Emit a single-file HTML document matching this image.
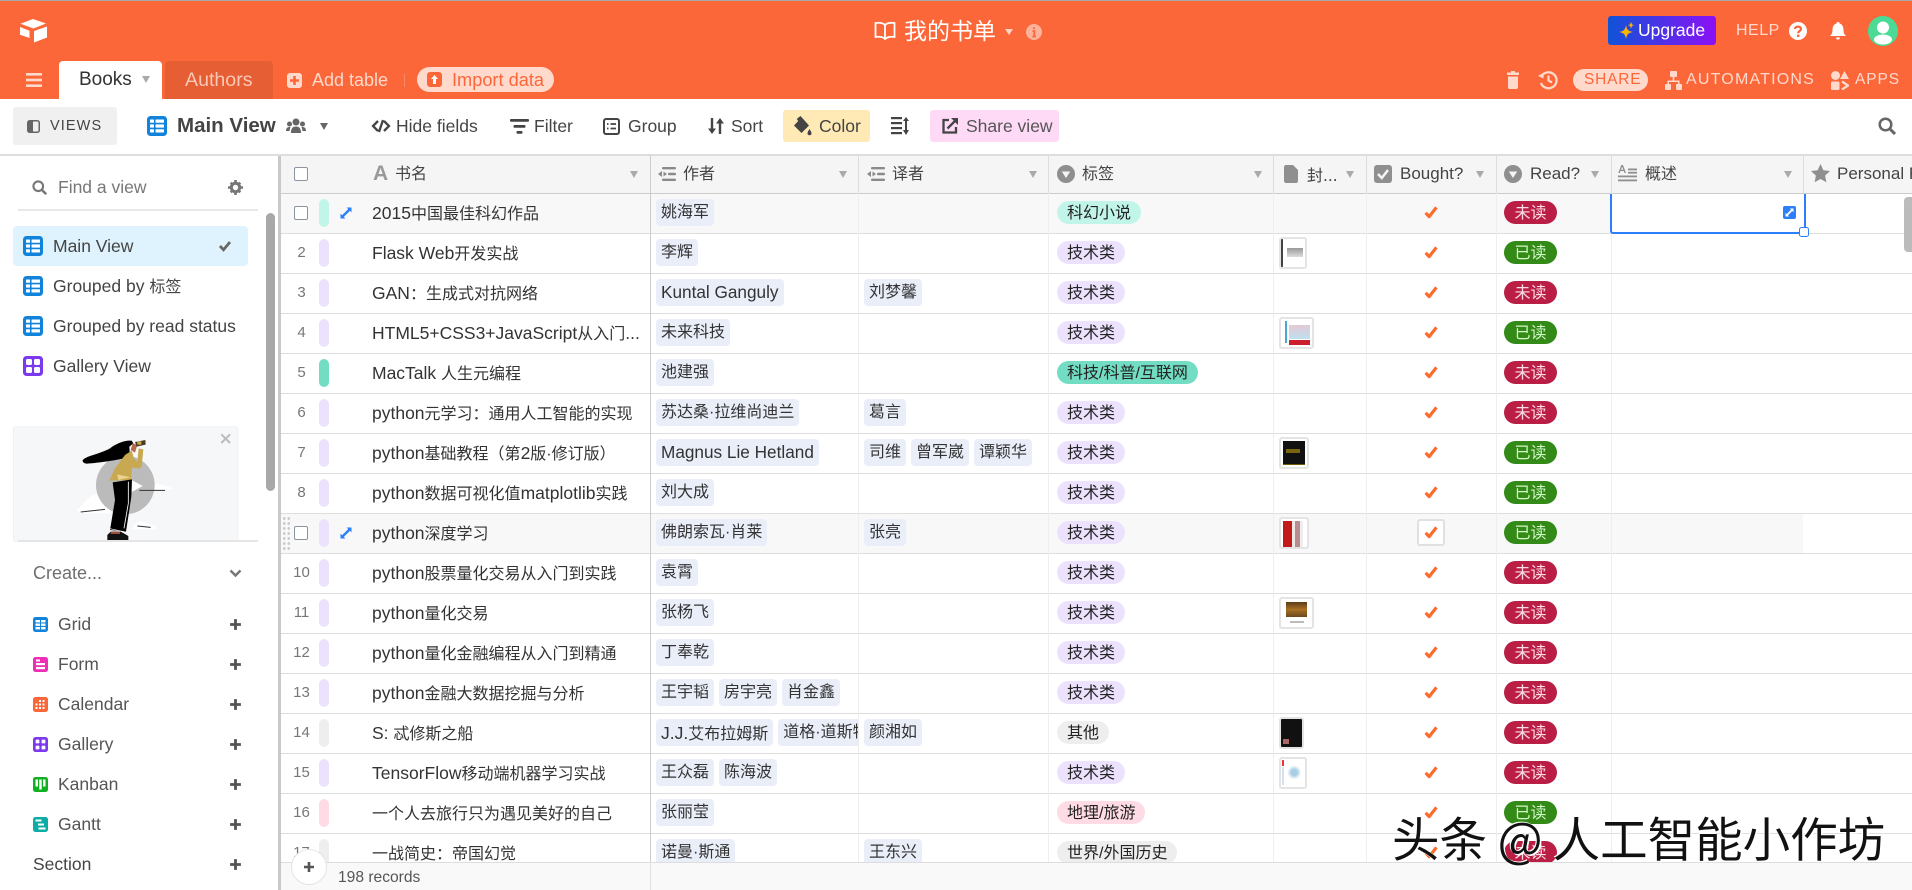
<!DOCTYPE html>
<html lang="zh"><head><meta charset="utf-8"><title>我的书单</title>
<style>
*{box-sizing:border-box}
html,body{margin:0;padding:0}
body{width:1912px;height:890px;overflow:hidden;position:relative;background:#fff;font-family:"Liberation Sans","Noto Sans CJK SC",sans-serif;font-size:16px;color:#333}
.a{position:absolute}
.x{position:absolute;white-space:nowrap;line-height:24px}
svg{display:block}
.L{font-size:17.5px}
.tri{position:absolute;width:0;height:0;border-left:4.5px solid transparent;border-right:4.5px solid transparent;border-top:7px solid #aaa}
.h{font-size:16px;color:#444;top:163px}
.h.L{font-size:17px;top:162px}
.sv{font-size:17.5px;color:#444}
.nav{font-size:17.5px;color:#555}
.r{position:absolute;left:280px;width:1632px;height:40px;border-bottom:1px solid #dedede;overflow:hidden}
.r.f{background:linear-gradient(90deg,#f8f8f8 1523px,#fff 1523px)}
.b{position:absolute;left:39px;top:5px;width:10px;height:28px;border-radius:5px}
.n{position:absolute;left:0;width:43px;top:7px;text-align:center;font-size:15px;line-height:24px;color:#777}
.t{position:absolute;left:92px;top:7px;line-height:24px;white-space:nowrap;color:#333}
.c1,.c2{position:absolute;top:5px;display:flex;gap:5px;overflow:hidden}
.c1{left:376px;width:202px}
.c2{left:584px;width:190px}
.p{flex:none;height:27px;line-height:28px;padding:0 5px;background:#e9eef9;border-radius:4px;color:#333;white-space:nowrap}
.p.L{font-size:17.2px;line-height:27px}
.tg{position:absolute;left:777px;top:7px;height:23px;line-height:25px;padding:0 10px;border-radius:12px;white-space:nowrap;color:#222;background:#ede2fe}
.cv{position:absolute;left:999px;top:3px;height:32px;border:2px solid #e4e4e4;border-radius:3px;background:#fff}
.ck{position:absolute;left:1144px;top:11px;width:14px;height:14px}
.rd{position:absolute;left:1224px;top:7px;width:53px;height:23px;line-height:25px;text-align:center;border-radius:12px}
.u{background:#ba1e45;color:#ffdce5}
.y{background:#338a17;color:#d1f7c4}
.cb{position:absolute;left:14px;top:12px;width:14px;height:14px;border:1px solid #8b94a0;border-radius:2px;background:#fff}
.e{position:absolute;left:59px;top:12px;width:14px;height:14px}
.v{position:absolute;top:155px;height:707px;width:1px;background:#eee}
.hv{position:absolute;top:155px;height:38px;width:1px;background:#ddd}
</style></head><body>
<svg width="0" height="0" style="position:absolute"><defs>
<symbol id="tb" viewBox="0 0 20 20"><rect width="20" height="20" rx="3.5" fill="#1283da"/><g fill="#fff"><rect x="3" y="3.5" width="4" height="3.2" rx=".6"/><rect x="8.5" y="3.5" width="8.5" height="3.2" rx=".6"/><rect x="3" y="8.4" width="4" height="3.2" rx=".6"/><rect x="8.5" y="8.4" width="8.5" height="3.2" rx=".6"/><rect x="3" y="13.3" width="4" height="3.2" rx=".6"/><rect x="8.5" y="13.3" width="8.5" height="3.2" rx=".6"/></g></symbol>
<symbol id="ch" viewBox="0 0 14 14"><path d="M1.6 7.8 5.2 11.6 12.4 2.4" fill="none" stroke="#fc6d2d" stroke-width="3.2" stroke-linejoin="round"/></symbol>
<symbol id="ex" viewBox="0 0 14 14"><path d="M3.6 10.4 10.4 3.6" stroke="#2d7ff9" stroke-width="2.4"/><path d="M7.6 1.5H12.5V6.4ZM1.5 7.6V12.5H6.4Z" fill="#2d7ff9"/></symbol>
<symbol id="pl" viewBox="0 0 12 12"><path d="M6 1V11M1 6H11" stroke="#555" stroke-width="2.6"/></symbol>
<symbol id="fl" viewBox="0 0 18 14"><g fill="#8a8a8a"><rect x="4" y="0" width="14" height="2.4" rx="1"/><rect x="10" y="5.8" width="8" height="2.4" rx="1"/><rect x="4" y="11.6" width="14" height="2.4" rx="1"/><path d="M0 7 4 4V10ZM9 7 5.5 4.500V9.500Z"/></g></symbol>
<symbol id="sl" viewBox="0 0 18 18"><circle cx="9" cy="9" r="9" fill="#8f8f8f"/><path d="M4.800 6.500H13.200L9 13Z" fill="#f5f5f5"/></symbol>
</defs></svg>

<!-- top bar -->
<div class="a" style="left:0;top:0;width:1912px;height:99px;background:#fb6739"></div>
<div class="a" style="left:0;top:0;width:1912px;height:1px;background:#a8a8a8"></div>
<svg class="a" style="left:19px;top:19px" width="29" height="24" viewBox="0 0 29 24"><path d="M14 0 27 4.500 14.500 9.500 1.500 4.800Z" fill="#fff"/><path d="M1 8 10.500 11.800V19L1 15.800Z" fill="#fff"/><path d="M15 12 28 7.500V18.500L15 23.500Z" fill="#fff"/></svg>
<svg class="a" style="left:874px;top:21px" width="22" height="20" viewBox="0 0 22 20" fill="none" stroke="#fff" stroke-width="1.800"><path d="M11 4C9 2 5 1.500 1.500 2V16C5 15.500 9 16 11 18 13 16 17 15.500 20.500 16V2C17 1.500 13 2 11 4ZM11 4V18"/></svg>
<div class="x" style="left:904px;top:15px;font-size:23px;line-height:32px;color:#fff">我的书单</div>
<div class="tri" style="left:1005px;top:29px;border-top-color:#ffd3c5;border-left-width:4px;border-right-width:4px;border-top-width:6px"></div>
<svg class="a" style="left:1026px;top:24px" width="16" height="16" viewBox="0 0 16 16"><circle cx="8" cy="8" r="8" fill="#fdb29b"/><path d="M8 3.200V5M6.500 7H8.300V12.500M6.300 12.500H10" stroke="#fb6739" stroke-width="1.800" fill="none"/></svg>
<div class="a" style="left:1608px;top:16px;width:108px;height:29px;border-radius:3px;background:linear-gradient(90deg,#0f53d8,#8c10f6)"></div>
<svg class="a" style="left:1618px;top:22px" width="16" height="18" viewBox="0 0 16 18"><path d="M8 3C9 8 10 9 15 10 10 11 9 12 8 17 7 12 6 11 1 10 6 9 7 8 8 3Z" fill="#fcb400"/><path d="M13 0 14 2.500 16 3 14 4 13 6.500 12 4 10 3 12 2.500Z" fill="#fcb400"/></svg>
<div class="x" style="left:1638px;top:18px;font-size:17.500px;color:#fff">Upgrade</div>
<div class="x" style="left:1736px;top:19px;font-size:16px;letter-spacing:.5px;color:#ffd9cc">HELP</div>
<svg class="a" style="left:1789px;top:22px" width="18" height="18" viewBox="0 0 18 18"><circle cx="9" cy="9" r="9" fill="#fff"/><path d="M6 7C6 3.800 12 3.800 12 7 12 9 9.200 9 9.200 11.300" fill="none" stroke="#fb6739" stroke-width="2.200"/><rect x="8" y="12.600" width="2.400" height="2.400" fill="#fb6739"/></svg>
<svg class="a" style="left:1830px;top:22px" width="16" height="18" viewBox="0 0 16 18"><path d="M8 0C9 0 9.500.6 9.500 1.500 12.500 2.300 13.500 5 13.500 8 13.500 11 14.500 12.500 16 14H0C1.500 12.500 2.500 11 2.500 8 2.500 5 3.500 2.300 6.500 1.500 6.500.6 7 0 8 0ZM6 15.500H10C10 18.300 6 18.300 6 15.500Z" fill="#fff"/></svg>
<svg class="a" style="left:1868px;top:16px" width="30" height="30" viewBox="0 0 30 30"><circle cx="15" cy="15" r="15" fill="#4bdb95"/><circle cx="15" cy="11.500" r="6" fill="#fff"/><ellipse cx="15" cy="23.500" rx="9" ry="5" fill="#fff"/></svg>

<!-- tab row -->
<svg class="a" style="left:26px;top:73px" width="16" height="14" viewBox="0 0 16 14"><g fill="#ffd9cc"><rect y="0" width="16" height="2.600"/><rect y="5.700" width="16" height="2.600"/><rect y="11.400" width="16" height="2.600"/></g></svg>
<div class="a" style="left:59px;top:61px;width:103px;height:38px;background:#fff;border-radius:4px 4px 0 0"></div>
<div class="x" style="left:79px;top:68px;font-size:19px;color:#333">Books</div>
<div class="tri" style="left:142px;top:76px"></div>
<div class="a" style="left:165px;top:61px;width:108px;height:38px;background:#e55e34;border-radius:4px 4px 0 0"></div>
<div class="x" style="left:185px;top:68px;font-size:19.600px;color:#fcc8b6">Authors</div>
<svg class="a" style="left:287px;top:73px" width="15" height="15" viewBox="0 0 15 15"><rect width="15" height="15" rx="3" fill="#ffd9cc"/><path d="M7.500 3V12M3 7.500H12" stroke="#fb6739" stroke-width="2.600"/></svg>
<div class="x" style="left:312px;top:68px;font-size:18px;color:#ffd9cc">Add table</div>
<div class="a" style="left:404px;top:74px;width:1px;height:13px;background:#fc8c69"></div>
<div class="a" style="left:417px;top:67px;width:137px;height:25px;border-radius:13px;background:#ffd9cc"></div>
<svg class="a" style="left:427px;top:72px" width="15" height="15" viewBox="0 0 15 15"><rect width="15" height="15" rx="3" fill="#fb6739"/><path d="M7.500 3 11 7H9V12H6V7H4Z" fill="#fff"/></svg>
<div class="x" style="left:452px;top:68px;font-size:18.200px;color:#fb6739">Import data</div>
<svg class="a" style="left:1507px;top:71px" width="12" height="18" viewBox="0 0 12 18" fill="#ffd9cc"><path d="M4 0H8V1.500H12V4H0V1.500H4ZM1 5.500H11V16C11 17 10.500 18 9.500 18H2.500C1.500 18 1 17 1 16Z"/></svg>
<svg class="a" style="left:1538px;top:70px" width="20" height="20" viewBox="0 0 20 20" fill="none" stroke="#ffd9cc" stroke-width="2.300"><path d="M3.500 6.500A8 8 0 1 1 3 13"/><path d="M10.500 5.500V10.500L14 12.500"/><path d="M0 6 5.500 8.500 5.800 2.500Z" fill="#ffd9cc" stroke="none"/></svg>
<div class="a" style="left:1573px;top:69px;width:75px;height:22px;border-radius:11px;background:#ffd9cc"></div>
<div class="x" style="left:1584px;top:68px;font-size:15.500px;letter-spacing:.8px;color:#fb6739">SHARE</div>
<svg class="a" style="left:1665px;top:71px" width="17" height="19" viewBox="0 0 17 19" fill="#ffd9cc"><rect x="5" y="0" width="7" height="6" rx="1"/><rect x="0" y="13" width="6" height="6" rx="1"/><rect x="11" y="13" width="6" height="6" rx="1"/><path d="M7.700 6H9.300V9.500H14.500V13H13V11H4V13H2.500V9.500H7.700Z"/></svg>
<div class="x" style="left:1686px;top:68px;font-size:16px;letter-spacing:1.200px;color:#ffd9cc">AUTOMATIONS</div>
<svg class="a" style="left:1831px;top:71px" width="18" height="19" viewBox="0 0 18 19" fill="#ffd9cc"><circle cx="4.500" cy="4.500" r="4.500"/><path d="M13.500 0 18 8H9Z"/><rect y="10.500" width="8.500" height="8.500" rx="1.500"/><path d="M11 10.500 17 14.500 11 18.500" fill="none" stroke="#ffd9cc" stroke-width="2.400"/></svg>
<div class="x" style="left:1855px;top:68px;font-size:15.500px;letter-spacing:.9px;color:#ffd9cc">APPS</div>

<!-- toolbar -->
<div class="a" style="left:13px;top:107px;width:104px;height:38px;background:#f0f0f0;border-radius:3px"></div>
<svg class="a" style="left:27px;top:120px" width="13" height="13" viewBox="0 0 13 13"><rect x=".75" y=".75" width="11.500" height="11.500" rx="2" fill="none" stroke="#666" stroke-width="1.500"/><rect x="1" y="1" width="5" height="11" fill="#666"/></svg>
<div class="x" style="left:50px;top:114px;font-size:14.500px;letter-spacing:1.100px;color:#444">VIEWS</div>
<svg class="a" style="left:147px;top:116px" width="20" height="20"><use href="#tb"/></svg>
<div class="x" style="left:177px;top:113px;font-size:20.500px;line-height:26px;font-weight:bold;color:#444">Main View</div>
<svg class="a" style="left:286px;top:118px" width="20" height="16" viewBox="0 0 20 16" fill="#666"><circle cx="10" cy="4" r="3.500"/><circle cx="3.500" cy="6" r="2.500"/><circle cx="16.500" cy="6" r="2.500"/><path d="M5 15C5 10 7 8.500 10 8.500 13 8.500 15 10 15 15ZM0 13C0 10 1.500 9 3.500 9 4.200 9 4.500 9.200 4.500 9.500 3.800 10.500 3.600 12 3.600 13ZM20 13C20 10 18.500 9 16.500 9 15.800 9 15.500 9.200 15.500 9.500 16.200 10.500 16.400 12 16.400 13Z"/></svg>
<div class="tri" style="left:320px;top:123px;border-top-color:#666"></div>
<svg class="a" style="left:371px;top:118px" width="20" height="16" viewBox="0 0 20 16" fill="none" stroke="#444" stroke-width="2.300"><path d="M7 3 2 8 7 13M13 3 18 8 13 13M12 2 8 14"/></svg>
<div class="x sv" style="left:396px;top:114px">Hide fields</div>
<svg class="a" style="left:510px;top:119px" width="19" height="15" viewBox="0 0 19 15" fill="#444"><rect width="19" height="2.800" rx="1"/><rect x="3.500" y="6" width="12" height="2.800" rx="1"/><rect x="6.500" y="12" width="6" height="2.800" rx="1"/></svg>
<div class="x sv" style="left:534px;top:114px">Filter</div>
<svg class="a" style="left:603px;top:118px" width="17" height="17" viewBox="0 0 17 17" fill="none" stroke="#444" stroke-width="2"><rect x="1" y="1" width="15" height="15" rx="2"/><path d="M4 6H5.500M7.500 6H13M4 10.500H5.500M7.500 10.500H13" stroke-width="1.800"/></svg>
<div class="x sv" style="left:628px;top:114px">Group</div>
<svg class="a" style="left:708px;top:118px" width="16" height="16" viewBox="0 0 16 16" fill="#444"><path d="M2.800 0H5.200V10.500H8L4 16 0 10.500H2.800ZM10.800 16H13.200V5.500H16L12 0 8 5.500H10.800Z"/></svg>
<div class="x sv" style="left:731px;top:114px">Sort</div>
<div class="a" style="left:783px;top:110px;width:87px;height:32px;border-radius:3px;background:#ffe9b4"></div>
<svg class="a" style="left:793px;top:116px" width="19" height="20" viewBox="0 0 19 20" fill="#444"><path d="M7.500 0 16 9.500 8.500 17 1 9.500 5.200 5 3.800 3 5.200 1.800ZM16.500 13C17.700 15 18.500 16 18.500 17.300A2 2 0 0 1 14.500 17.300C14.500 16 15.300 15 16.500 13Z"/></svg>
<div class="x sv" style="left:819px;top:114px">Color</div>
<svg class="a" style="left:891px;top:117px" width="18" height="18" viewBox="0 0 18 18" fill="#444"><rect width="11" height="2.200"/><rect y="5" width="11" height="2.200"/><rect y="10" width="11" height="2.200"/><rect y="15" width="11" height="2.200"/><path d="M15 0 18 4H16V13H18L15 18 12 13H14V4H12Z"/></svg>
<div class="a" style="left:930px;top:110px;width:129px;height:32px;border-radius:3px;background:#ffdaf6"></div>
<svg class="a" style="left:942px;top:118px" width="16" height="16" viewBox="0 0 16 16" fill="none" stroke="#444" stroke-width="2.300"><path d="M7 2H1.500V14.500H14V9"/><path d="M5.500 10.500 13 3"/><path d="M9 0H16V7Z" fill="#444" stroke="none"/></svg>
<div class="x sv" style="left:966px;top:114px;color:#555">Share view</div>
<svg class="a" style="left:1878px;top:117px" width="18" height="18" viewBox="0 0 18 18" fill="none" stroke="#666" stroke-width="2.500"><circle cx="7.500" cy="7.500" r="5.800"/><path d="M12 12 17 17" stroke-width="3"/></svg>
<div class="a" style="left:0;top:154px;width:1912px;height:2px;background:#ddd"></div>

<!-- sidebar -->
<svg class="a" style="left:32px;top:180px" width="15" height="15" viewBox="0 0 18 18" fill="none" stroke="#777" stroke-width="2.500"><circle cx="7.500" cy="7.500" r="5.800"/><path d="M12 12 17 17" stroke-width="3"/></svg>
<div class="x nav" style="left:58px;top:175px;color:#777">Find a view</div>
<svg class="a" style="left:228px;top:180px" width="15" height="15" viewBox="0 0 15 15"><circle cx="7.500" cy="7.500" r="4.200" fill="none" stroke="#777" stroke-width="3"/><path d="M6.200 0H8.800V3H6.200ZM6.200 12H8.800V15H6.200ZM0 6.200H3V8.800H0ZM12 6.200H15V8.800H12ZM1.800 3.600 3.600 1.800 5.300 3.500 3.500 5.300ZM9.700 11.500 11.500 9.700 13.200 11.400 11.400 13.200ZM1.800 11.400 3.500 9.700 5.300 11.500 3.600 13.200ZM9.700 3.500 11.400 1.800 13.200 3.600 11.500 5.300Z" fill="#777"/></svg>
<div class="a" style="left:18px;top:209px;width:240px;height:2px;background:#e8e8e8"></div>
<div class="a" style="left:13px;top:226px;width:235px;height:40px;border-radius:4px;background:#def3fd"></div>
<svg class="a" style="left:23px;top:236px" width="20" height="20"><use href="#tb"/></svg>
<div class="x nav" style="left:53px;top:234px;color:#444">Main View</div>
<svg class="a" style="left:219px;top:240px" width="12" height="12"><path d="M1 6 4.500 9.800 11 2" fill="none" stroke="#666" stroke-width="2.800"/></svg>
<svg class="a" style="left:23px;top:276px" width="20" height="20"><use href="#tb"/></svg>
<div class="x nav" style="left:53px;top:274px;color:#444">Grouped by <span style="font-size:16px">标签</span></div>
<svg class="a" style="left:23px;top:316px" width="20" height="20"><use href="#tb"/></svg>
<div class="x nav" style="left:53px;top:314px;color:#444">Grouped by read status</div>
<svg class="a" style="left:23px;top:356px" width="20" height="20" viewBox="0 0 20 20"><rect width="20" height="20" rx="3.500" fill="#7c39ed"/><g fill="#fff"><rect x="3" y="3" width="6" height="6" rx="1.500"/><rect x="11" y="3" width="6" height="6" rx="1.500"/><rect x="3" y="11" width="6" height="6" rx="1.500"/><rect x="11" y="11" width="6" height="6" rx="1.500"/></g></svg>
<div class="x nav" style="left:53px;top:354px;color:#444">Gallery View</div>
<div class="a" style="left:266px;top:213px;width:9px;height:278px;border-radius:5px;background:#a8a8a8"></div>

<svg class="a" style="left:0;top:230px" width="290" height="330" viewBox="0 0 870 990">
<rect x="40" y="590" width="674" height="345" rx="6" fill="#f6f7f9" stroke="#eee" stroke-width="2"/>
<path d="M230 838C250 830 260 800 285 795L330 800V850H240ZM400 890C410 875 420 868 440 880L470 890V898H395ZM420 775 470 760 520 775 480 782Z" fill="#fff"/>
<circle cx="376" cy="765" r="88" fill="#bbb"/>
<path d="M395 750 428 768 395 786Z" fill="#fff"/>
<path d="M248 690C262 676 300 672 330 655 350 640 375 630 395 632L400 640 388 650 390 680C360 690 300 698 262 701 252 701 247 696 248 690Z" fill="#000"/>
<path d="M398 640 412 645 405 668 392 660Z" fill="#b76a4e"/>
<path d="M405 636 436 630 437 644 410 650Z" fill="#4a3c20"/><rect x="412" y="634" width="12" height="10" fill="#c8a850"/>
<path d="M375 675 395 662 402 685 412 695 416 655 430 658 425 710 418 716 396 712 393 750 328 752 345 715Z" fill="#c8a850"/>
<path d="M352 733 392 742 355 750Z" fill="#e8d48a"/>
<path d="M338 757 396 748 394 800 378 905 330 900 345 810Z" fill="#000"/>
<path d="M385 755V820L372 895" fill="none" stroke="#fff" stroke-width="2.500"/><path d="M330 896 372 905" stroke="#fff" stroke-width="2"/>
<path d="M332 905H362L385 918V930H322V915Z" fill="#111"/><path d="M332 905H360V912H332Z" fill="#9b4e3c"/>
<path d="M242 846 315 838M418 781H495M412 888 452 892" stroke="#333" stroke-width="3"/>
<path d="M664 613 690 639M690 613 664 639" stroke="#bbb" stroke-width="6"/>
</svg>
<div class="a" style="left:18px;top:540px;width:240px;height:2px;background:#e5e5e5"></div>

<div class="x nav" style="left:33px;top:561px;color:#6f6f6f;font-size:18px">Create...</div>
<svg class="a" style="left:229px;top:569px" width="13" height="9"><path d="M1.500 1.500 6.500 6.500 11.500 1.500" fill="none" stroke="#777" stroke-width="2.500"/></svg>
<svg class="a" style="left:33px;top:617px" width="15" height="15" viewBox="0 0 15 15"><rect width="15" height="15" rx="2.500" fill="#1283da"/><g fill="#fff"><rect x="2.500" y="3" width="4.500" height="2.400"/><rect x="8" y="3" width="4.500" height="2.400"/><rect x="2.500" y="6.500" width="4.500" height="2.400"/><rect x="8" y="6.500" width="4.500" height="2.400"/><rect x="2.500" y="10" width="4.500" height="2.400"/><rect x="8" y="10" width="4.500" height="2.400"/></g></svg>
<div class="x nav" style="left:58px;top:612px">Grid</div>
<svg class="a" style="left:33px;top:657px" width="15" height="15" viewBox="0 0 15 15"><rect width="15" height="15" rx="2.500" fill="#ee2fb5"/><g fill="#fff"><rect x="3" y="2.500" width="4" height="2"/><rect x="3" y="6" width="9" height="2.200"/><rect x="3" y="10" width="9" height="2.200"/></g></svg>
<div class="x nav" style="left:58px;top:652px">Form</div>
<svg class="a" style="left:33px;top:697px" width="15" height="15" viewBox="0 0 15 15"><rect width="15" height="15" rx="2.500" fill="#fb6739"/><g fill="#fff"><rect x="6" y="3" width="2" height="2"/><rect x="9.500" y="3" width="2" height="2"/><rect x="2.500" y="6.500" width="2" height="2"/><rect x="6" y="6.500" width="2" height="2"/><rect x="9.500" y="6.500" width="2" height="2"/><rect x="2.500" y="10" width="2" height="2"/><rect x="6" y="10" width="2" height="2"/><rect x="9.500" y="10" width="2" height="2"/></g></svg>
<div class="x nav" style="left:58px;top:692px">Calendar</div>
<svg class="a" style="left:33px;top:737px" width="15" height="15" viewBox="0 0 20 20"><rect width="20" height="20" rx="3.500" fill="#7c39ed"/><g fill="#fff"><rect x="3.500" y="3.500" width="5" height="5" rx="1"/><rect x="11.500" y="3.500" width="5" height="5" rx="1"/><rect x="3.500" y="11.500" width="5" height="5" rx="1"/><rect x="11.500" y="11.500" width="5" height="5" rx="1"/></g></svg>
<div class="x nav" style="left:58px;top:732px">Gallery</div>
<svg class="a" style="left:33px;top:777px" width="15" height="15" viewBox="0 0 15 15"><rect width="15" height="15" rx="2.500" fill="#11af22"/><g fill="#fff"><rect x="2.500" y="2.500" width="2.500" height="7"/><rect x="6.200" y="2.500" width="2.500" height="10"/><rect x="10" y="2.500" width="2.500" height="7"/></g></svg>
<div class="x nav" style="left:58px;top:772px">Kanban</div>
<svg class="a" style="left:33px;top:817px" width="15" height="15" viewBox="0 0 15 15"><rect width="15" height="15" rx="2.500" fill="#0dada5"/><g fill="#fff"><rect x="2.500" y="2.500" width="6" height="2"/><rect x="5" y="6.500" width="6" height="2"/><rect x="5.500" y="10.500" width="7" height="2"/></g></svg>
<div class="x nav" style="left:58px;top:812px">Gantt</div>
<div class="x nav" style="left:33px;top:852px;color:#444">Section</div>
<svg class="a" style="left:229px;top:618px" width="13" height="13"><use href="#pl"/></svg>
<svg class="a" style="left:229px;top:658px" width="13" height="13"><use href="#pl"/></svg>
<svg class="a" style="left:229px;top:698px" width="13" height="13"><use href="#pl"/></svg>
<svg class="a" style="left:229px;top:738px" width="13" height="13"><use href="#pl"/></svg>
<svg class="a" style="left:229px;top:778px" width="13" height="13"><use href="#pl"/></svg>
<svg class="a" style="left:229px;top:818px" width="13" height="13"><use href="#pl"/></svg>
<svg class="a" style="left:229px;top:858px" width="13" height="13"><use href="#pl"/></svg>

<!-- rows -->
<div class="r f" style="top:194px"><i class="b" style="background:#c2f5e9"></i><i class="cb"></i><svg class="e"><use href="#ex"/></svg><span class="t"><span class="L">2015</span>中国最佳科幻作品</span><div class="c1"><span class="p">姚海军</span></div><span class="tg" style="background:#c2f5e9">科幻小说</span><svg class="ck"><use href="#ch"/></svg><span class="rd u">未读</span></div>
<div class="r" style="top:234px"><i class="b" style="background:#ede2fe"></i><span class="n">2</span><span class="t"><span class="L">Flask Web</span>开发实战</span><div class="c1"><span class="p">李辉</span></div><span class="tg">技术类</span><i class="cv" style="width:28px;background:linear-gradient(90deg,#444 0 2px,#fff 2px 24px,#d44 24px) 0 0/100% 100%,#fff"></i><i class="a" style="left:1007px;top:14px;width:16px;height:9px;background:linear-gradient(#999,#ddd)"></i><svg class="ck"><use href="#ch"/></svg><span class="rd y">已读</span></div>
<div class="r" style="top:274px"><i class="b" style="background:#ede2fe"></i><span class="n">3</span><span class="t"><span class="L">GAN</span>：生成式对抗网络</span><div class="c1"><span class="p L">Kuntal Ganguly</span></div><div class="c2"><span class="p">刘梦馨</span></div><span class="tg">技术类</span><svg class="ck"><use href="#ch"/></svg><span class="rd u">未读</span></div>
<div class="r" style="top:314px"><i class="b" style="background:#ede2fe"></i><span class="n">4</span><span class="t"><span class="L">HTML5+CSS3+JavaScript</span>从入门<span class="L">...</span></span><div class="c1"><span class="p">未来科技</span></div><span class="tg">技术类</span><i class="cv" style="width:35px;background:linear-gradient(#c9202c,#c9202c) 8px 21px/21px 5px no-repeat,linear-gradient(#e3c9d6,#bfe0ee) 8px 6px/21px 14px no-repeat,linear-gradient(#4aa7d0,#4aa7d0) 4px 2px/2px 22px no-repeat,#fff"></i><svg class="ck"><use href="#ch"/></svg><span class="rd y">已读</span></div>
<div class="r" style="top:354px"><i class="b" style="background:#72ddc3"></i><span class="n">5</span><span class="t"><span class="L">MacTalk </span>人生元编程</span><div class="c1"><span class="p">池建强</span></div><span class="tg" style="background:#72ddc3">科技/科普/互联网</span><svg class="ck"><use href="#ch"/></svg><span class="rd u">未读</span></div>
<div class="r" style="top:394px"><i class="b" style="background:#ede2fe"></i><span class="n">6</span><span class="t"><span class="L">python</span>元学习：通用人工智能的实现</span><div class="c1"><span class="p">苏达桑·拉维尚迪兰</span></div><div class="c2"><span class="p">葛言</span></div><span class="tg">技术类</span><svg class="ck"><use href="#ch"/></svg><span class="rd u">未读</span></div>
<div class="r" style="top:434px"><i class="b" style="background:#ede2fe"></i><span class="n">7</span><span class="t"><span class="L">python</span>基础教程（第<span class="L">2</span>版·修订版）</span><div class="c1"><span class="p L">Magnus Lie Hetland</span></div><div class="c2"><span class="p">司维</span><span class="p">曾军崴</span><span class="p">谭颖华</span></div><span class="tg">技术类</span><i class="cv" style="width:30px;background:linear-gradient(#7a6510,#7a6510) 5px 10px/14px 4px no-repeat,linear-gradient(180deg,#111 0 23px,#d0a800 24px) 2px 2px/22px 24px no-repeat,#fff"></i><svg class="ck"><use href="#ch"/></svg><span class="rd y">已读</span></div>
<div class="r" style="top:474px"><i class="b" style="background:#ede2fe"></i><span class="n">8</span><span class="t"><span class="L">python</span>数据可视化值<span class="L">matplotlib</span>实践</span><div class="c1"><span class="p">刘大成</span></div><span class="tg">技术类</span><svg class="ck"><use href="#ch"/></svg><span class="rd y">已读</span></div>
<div class="r f" style="top:514px"><i class="a" style="left:2px;top:2px;width:9px;height:36px;background:radial-gradient(circle,#ccc 1.300px,transparent 1.500px) 0 0/4.500px 5px"></i><i class="b" style="background:#ede2fe"></i><i class="cb"></i><svg class="e"><use href="#ex"/></svg><span class="t"><span class="L">python</span>深度学习</span><div class="c1"><span class="p">佛朗索瓦·肖莱</span></div><div class="c2"><span class="p">张亮</span></div><span class="tg">技术类</span><i class="cv" style="width:30px;background:linear-gradient(90deg,#c21a1a 0 9px,#efe6e6 9px 12px,#b88c90 12px 17px,#eee 17px 20px,#fff 20px) 2px 2px/22px 26px no-repeat,#fff"></i><i class="a" style="left:1137px;top:5px;width:28px;height:27px;background:#fff;border:2px solid #e0e0e0;border-radius:3px"></i><svg class="ck"><use href="#ch"/></svg><span class="rd y">已读</span></div>
<div class="r" style="top:554px"><i class="b" style="background:#ede2fe"></i><span class="n">10</span><span class="t"><span class="L">python</span>股票量化交易从入门到实践</span><div class="c1"><span class="p">袁霄</span></div><span class="tg">技术类</span><svg class="ck"><use href="#ch"/></svg><span class="rd u">未读</span></div>
<div class="r" style="top:594px"><i class="b" style="background:#ede2fe"></i><span class="n">11</span><span class="t"><span class="L">python</span>量化交易</span><div class="c1"><span class="p">张杨飞</span></div><span class="tg">技术类</span><i class="cv" style="width:35px;background:linear-gradient(#5a3c18,#a96f25,#6a4a1e) 50% 3px/21px 15px no-repeat,linear-gradient(#bbb,#bbb) 50% 22px/14px 2px no-repeat,#fff"></i><svg class="ck"><use href="#ch"/></svg><span class="rd u">未读</span></div>
<div class="r" style="top:634px"><i class="b" style="background:#ede2fe"></i><span class="n">12</span><span class="t"><span class="L">python</span>量化金融编程从入门到精通</span><div class="c1"><span class="p">丁奉乾</span></div><span class="tg">技术类</span><svg class="ck"><use href="#ch"/></svg><span class="rd u">未读</span></div>
<div class="r" style="top:674px"><i class="b" style="background:#ede2fe"></i><span class="n">13</span><span class="t"><span class="L">python</span>金融大数据挖掘与分析</span><div class="c1"><span class="p">王宇韬</span><span class="p">房宇亮</span><span class="p">肖金鑫</span></div><span class="tg">技术类</span><svg class="ck"><use href="#ch"/></svg><span class="rd u">未读</span></div>
<div class="r" style="top:714px"><i class="b" style="background:#eee"></i><span class="n">14</span><span class="t"><span class="L">S: </span>忒修斯之船</span><div class="c1"><span class="p"><span class="L">J.J.</span>艾布拉姆斯</span><span class="p">道格·道斯特</span></div><div class="c2"><span class="p">颜湘如</span></div><span class="tg" style="background:#eee">其他</span><i class="cv" style="width:25px;background:linear-gradient(#a66,#a66) 2px 20px/6px 5px no-repeat,#111"></i><svg class="ck"><use href="#ch"/></svg><span class="rd u">未读</span></div>
<div class="r" style="top:754px"><i class="b" style="background:#ede2fe"></i><span class="n">15</span><span class="t"><span class="L">TensorFlow</span>移动端机器学习实战</span><div class="c1"><span class="p">王众磊</span><span class="p">陈海波</span></div><span class="tg">技术类</span><i class="cv" style="width:28px;background:linear-gradient(#e33,#e33) 1px 1px/2px 6px no-repeat,linear-gradient(#cfe3f2,#cfe3f2) 1px 8px/2px 18px no-repeat,radial-gradient(circle at 55% 48%,#a8cde4 0 3px,#fff 7px)"></i><svg class="ck"><use href="#ch"/></svg><span class="rd u">未读</span></div>
<div class="r" style="top:794px"><i class="b" style="background:#ffdce5"></i><span class="n">16</span><span class="t" style="top:8.500px">一个人去旅行只为遇见美好的自己</span><div class="c1"><span class="p">张丽莹</span></div><span class="tg" style="background:#ffdce5">地理/旅游</span><svg class="ck"><use href="#ch"/></svg><span class="rd y">已读</span></div>
<div class="r" style="top:834px"><i class="b" style="background:#eee"></i><span class="n">17</span><span class="t" style="top:8.500px">一战简史：帝国幻觉</span><div class="c1"><span class="p">诺曼·斯通</span></div><div class="c2"><span class="p">王东兴</span></div><span class="tg" style="background:#eee">世界/外国历史</span><svg class="ck"><use href="#ch"/></svg><span class="rd u">未读</span></div>

<!-- grid header -->
<div class="a" style="left:281px;top:156px;width:1631px;height:38px;background:#f5f5f5;border-bottom:1px solid #ccc"></div>
<i class="a" style="left:294px;top:167px;width:14px;height:14px;border:1px solid #8b94a0;border-radius:2px;background:#fff"></i>
<div class="x" style="left:373px;top:160px;font-size:21px;font-weight:bold;color:#999;line-height:28px">A</div>
<div class="x h" style="left:395px">书名</div><div class="tri" style="left:630px;top:171px"></div>
<svg class="a" style="left:658px;top:167px" width="18" height="14"><use href="#fl"/></svg>
<div class="x h" style="left:683px">作者</div><div class="tri" style="left:839px;top:171px"></div>
<svg class="a" style="left:867px;top:167px" width="18" height="14"><use href="#fl"/></svg>
<div class="x h" style="left:892px">译者</div><div class="tri" style="left:1029px;top:171px"></div>
<svg class="a" style="left:1057px;top:165px" width="18" height="18"><use href="#sl"/></svg>
<div class="x h" style="left:1082px">标签</div><div class="tri" style="left:1254px;top:171px"></div>
<svg class="a" style="left:1284px;top:165px" width="14" height="18" viewBox="0 0 14 18"><path d="M2 0H9L14 5V16C14 17 13 18 12 18H2C1 18 0 17 0 16V2C0 1 1 0 2 0Z" fill="#8f8f8f"/></svg>
<div class="x h" style="left:1307px">封<span class="L">...</span></div><div class="tri" style="left:1346px;top:171px"></div>
<svg class="a" style="left:1374px;top:165px" width="18" height="18" viewBox="0 0 18 18"><rect width="18" height="18" rx="3" fill="#8f8f8f"/><path d="M4 9 7.800 13 14 5" fill="none" stroke="#f5f5f5" stroke-width="2.500"/></svg>
<div class="x h L" style="left:1400px">Bought?</div><div class="tri" style="left:1476px;top:171px"></div>
<svg class="a" style="left:1504px;top:165px" width="18" height="18"><use href="#sl"/></svg>
<div class="x h L" style="left:1530px">Read?</div><div class="tri" style="left:1591px;top:171px"></div>
<svg class="a" style="left:1618px;top:165px" width="20" height="18" viewBox="0 0 20 18" fill="#8f8f8f"><path d="M3.300 0H5L8 8H6.500L5.800 6H2.500L1.800 8H.3ZM3 4.800H5.300L4.100 1.600Z"/><rect x="10" y="3.500" width="9" height="1.800"/><rect x="10" y="6.800" width="9" height="1.800"/><rect y="10.500" width="19" height="1.800"/><rect y="14.500" width="19" height="1.800"/></svg>
<div class="x h" style="left:1645px">概述</div><div class="tri" style="left:1784px;top:171px"></div>
<svg class="a" style="left:1811px;top:164px" width="19" height="19" viewBox="0 0 19 19"><path d="M9.500 0 12.400 6.300 19 7 14.100 11.600 15.400 18.300 9.500 15 3.600 18.300 4.900 11.600 0 7 6.600 6.300Z" fill="#8f8f8f"/></svg>
<div class="x h L" style="left:1837px">Personal Rating</div>

<!-- column lines -->
<div class="v" style="left:650px;background:#ccc"></div>
<div class="v" style="left:858px"></div><div class="v" style="left:1048px"></div><div class="v" style="left:1273px"></div><div class="v" style="left:1366px"></div><div class="v" style="left:1496px"></div><div class="v" style="left:1611px"></div>
<div class="hv" style="left:858px"></div><div class="hv" style="left:1048px"></div><div class="hv" style="left:1273px"></div><div class="hv" style="left:1366px"></div><div class="hv" style="left:1496px"></div><div class="hv" style="left:1611px"></div><div class="hv" style="left:1803px"></div>
<div class="a" style="left:278px;top:156px;width:3px;height:734px;background:#c9c9c9"></div>

<!-- selected cell -->
<div class="a" style="left:1610px;top:194px;width:196px;height:40px;background:#fff;border:2.500px solid #2d7ff9;border-top:0;border-radius:0 0 3px 3px"></div>
<svg class="a" style="left:1783px;top:206px" width="13" height="13" viewBox="0 0 13 13"><rect width="13" height="13" rx="2" fill="#2d7ff9"/><path d="M3.800 9.200 9.200 3.800" stroke="#fff" stroke-width="1.800"/><path d="M6.800 2.500H10.500V6.200ZM2.500 6.800V10.500H6.200Z" fill="#fff"/></svg>
<div class="a" style="left:1799px;top:227px;width:10px;height:10px;background:#fff;border:1.500px solid #2d7ff9;border-radius:2.500px"></div>
<div class="a" style="left:1904px;top:197px;width:8px;height:55px;background:#bbb;border-radius:4px 0 0 4px"></div>

<!-- footer -->
<div class="a" style="left:281px;top:862px;width:1631px;height:28px;background:#f9f9f9;border-top:1px solid #ddd"></div>
<div class="a" style="left:650px;top:862px;width:1px;height:28px;background:#e0e0e0"></div>
<div class="a" style="left:291px;top:849px;width:36px;height:36px;border-radius:18px;background:#fff;border:1px solid #e4e4e4"></div>
<svg class="a" style="left:303px;top:861px" width="12" height="12"><use href="#pl"/></svg>
<div class="x" style="left:338px;top:866px;font-size:15.600px;color:#555">198 records</div>

<!-- watermark -->
<div class="x" style="left:1392px;top:805px;font-size:47.500px;line-height:64px;font-weight:400;color:#111;text-shadow:1.500px 1.500px 0 #fff,-1px -1px 0 #fff;font-family:'Noto Sans CJK SC',sans-serif">头条 <span style="margin-right:10px">@</span>人工智能小作坊</div>
</body></html>
